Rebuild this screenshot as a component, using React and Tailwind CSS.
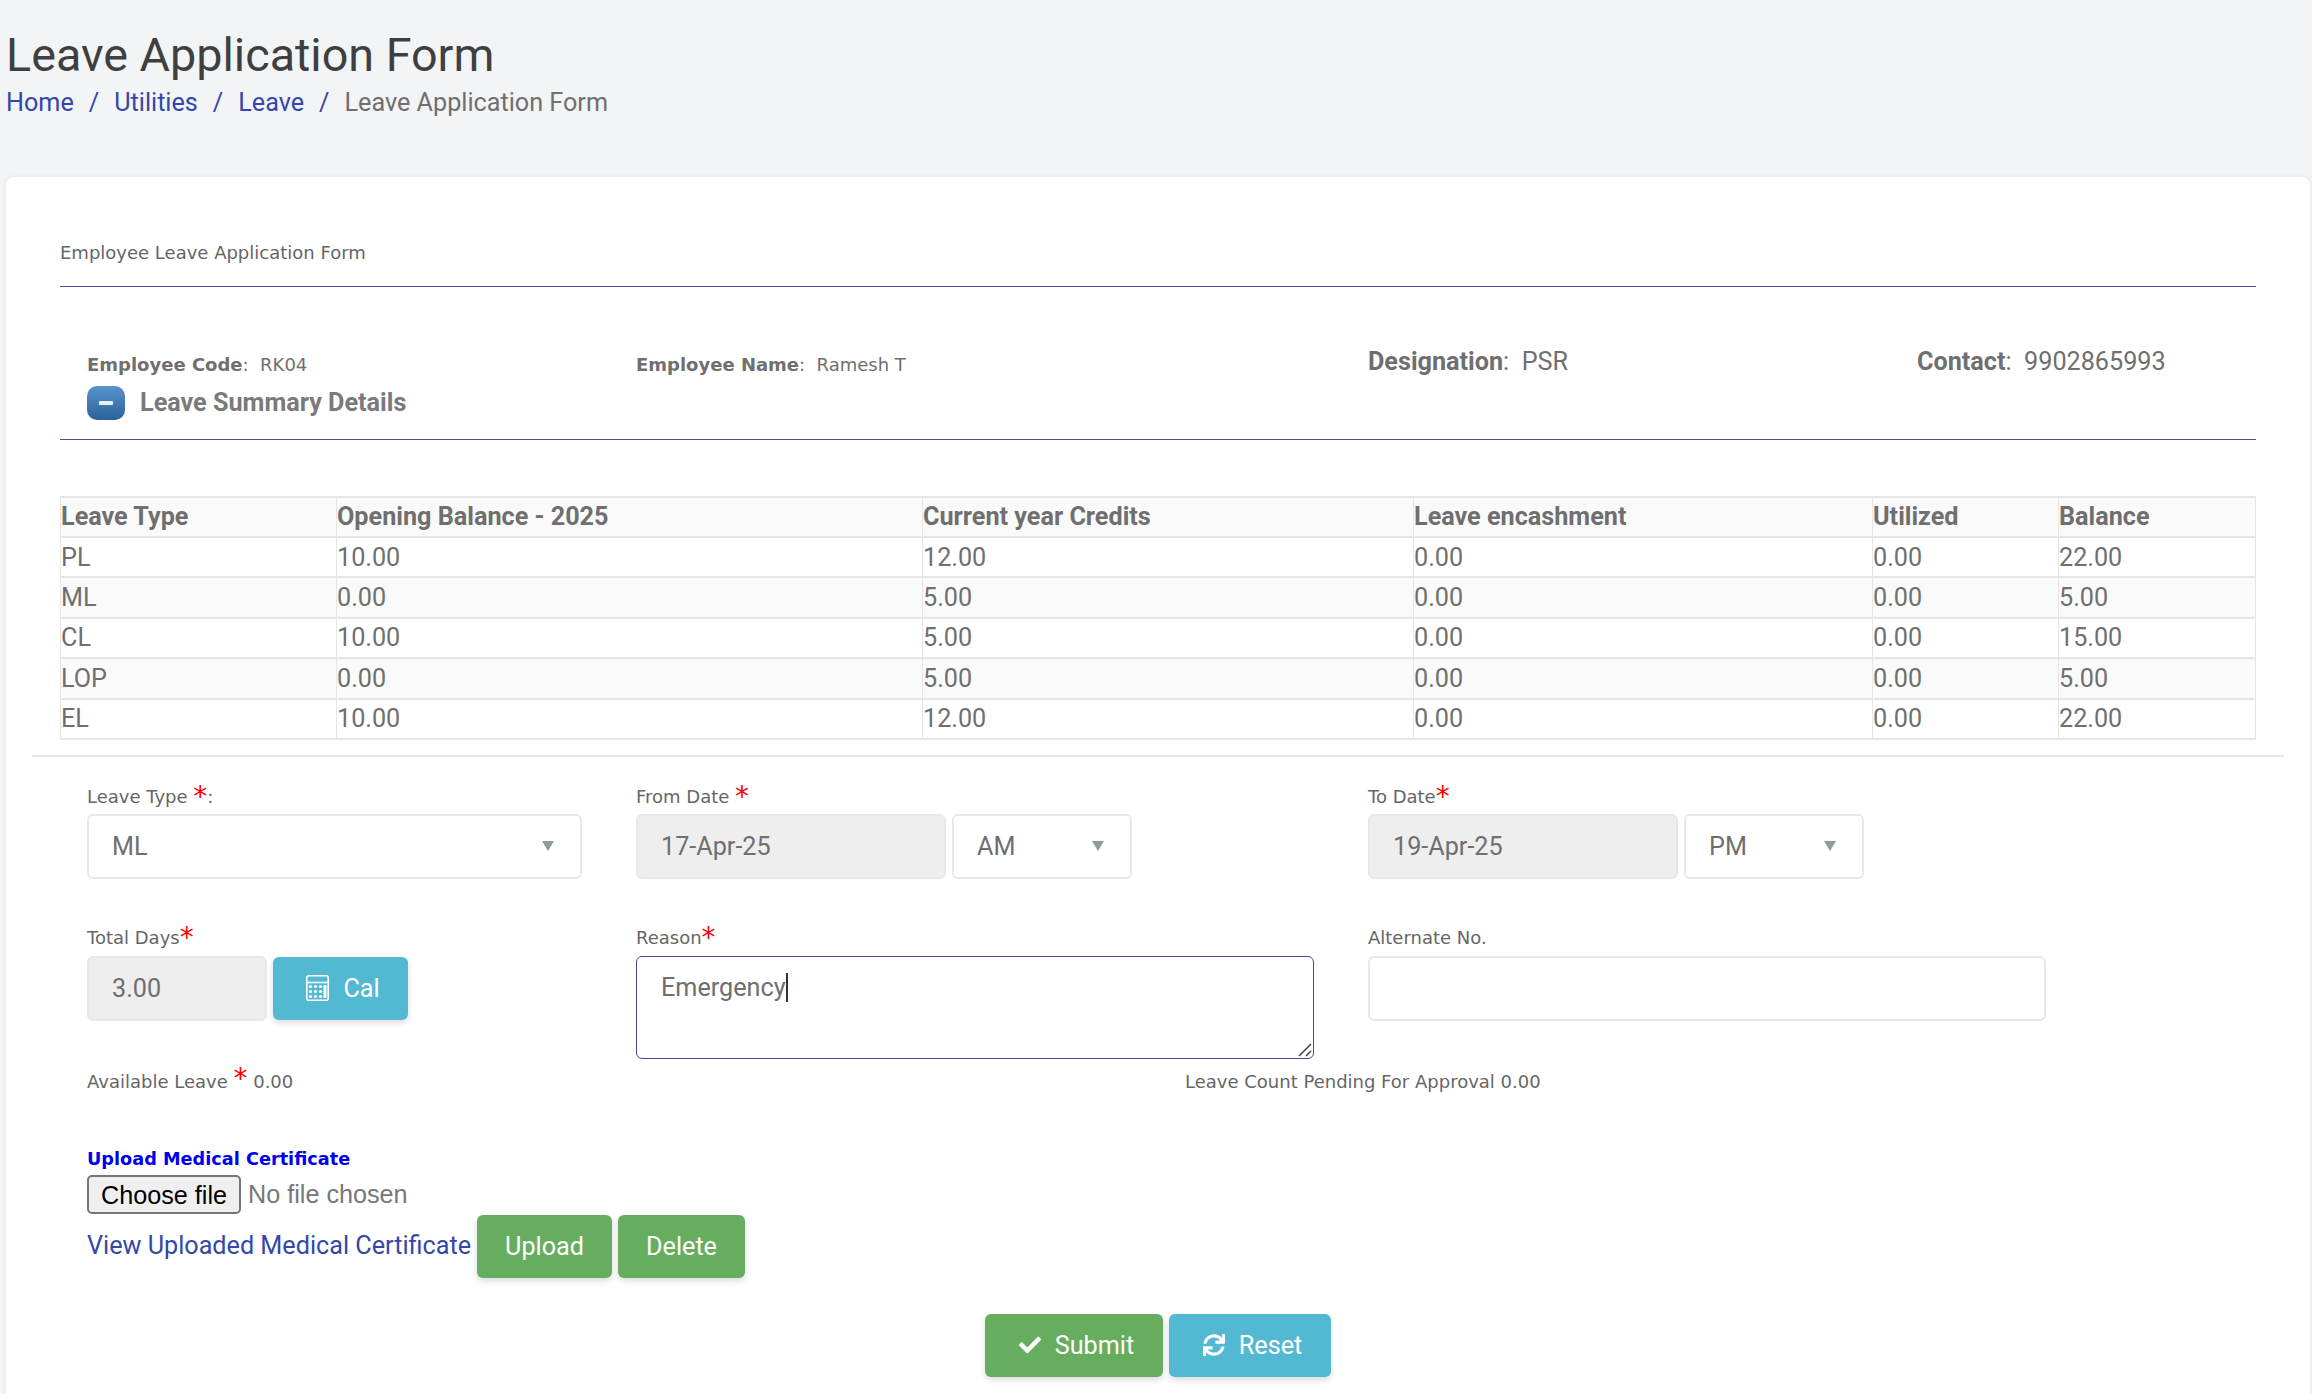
import React from "react";
import {FaCheck, FaSync} from "react-icons/fa";

const ROWS = [
    ["PL", "10.00", "12.00", "0.00", "0.00", "22.00"],
    ["ML", "0.00", "5.00", "0.00", "0.00", "5.00"],
    ["CL", "10.00", "5.00", "0.00", "0.00", "15.00"],
    ["LOP", "0.00", "5.00", "0.00", "0.00", "5.00"],
    ["EL", "10.00", "12.00", "0.00", "0.00", "22.00"],
];
const HEADERS = ["Leave Type", "Opening Balance - 2025", "Current year Credits", "Leave encashment", "Utilized", "Balance"];
const COLS = ["w-[276px]", "w-[586px]", "w-[491px]", "w-[459px]", "w-[186px]", "w-[197px]"];

const Star = () => <span className="text-[#ff0000] text-[28px] leading-[0]">*</span>;

const Label = ({children}) => (
    <div className="h-[28px] flex items-center text-[18px] text-[#666] font-['DejaVu_Sans',sans-serif] whitespace-nowrap">{children}</div>
);

const SelectBox = ({value, className}) => (
    <div className={`h-[65px] flex items-center justify-between bg-white border-2 border-[#e8e8e8] rounded-[6px] pl-[23px] pr-[26px] text-[25.2px] text-[#6f6f6f] ${className}`}>
        <span>{value}</span>
        <span className="w-0 h-0 border-x-[6px] border-x-transparent border-t-[10px] border-t-[#8f9a9f]"/>
    </div>
);

const ReadOnlyBox = ({value, className}) => (
    <div className={`h-[65px] flex items-center bg-[#eeeeee] border-2 border-[#e8e8e8] rounded-[6px] pl-[23px] text-[25.2px] text-[#6f6f6f] ${className}`}>
        {value}
    </div>
);

const CalcIcon = () => (
    <svg width="23" height="26" viewBox="0 0 23 26" fill="none" stroke="white" strokeWidth="1.6">
        <rect x="0.8" y="0.8" width="21.4" height="24.4" rx="2"/>
        <path d="M1 7.5h21"/>
        <g fill="white" stroke="none">
            <circle cx="4.5" cy="11.5" r="1.6"/>
            <circle cx="9.5" cy="11.5" r="1.6"/>
            <circle cx="14.5" cy="11.5" r="1.6"/>
            <circle cx="4.5" cy="16.5" r="1.6"/>
            <circle cx="9.5" cy="16.5" r="1.6"/>
            <circle cx="14.5" cy="16.5" r="1.6"/>
            <circle cx="4.5" cy="21.5" r="1.6"/>
            <circle cx="9.5" cy="21.5" r="1.6"/>
            <circle cx="14.5" cy="21.5" r="1.6"/>
            <rect x="17.5" y="10" width="3" height="13" rx="1.2"/>
        </g>
    </svg>
);

const ActionButton = ({children, className}) => (
    <button type="button" className={`flex items-center justify-center text-white text-[25.2px] font-normal rounded-[6px] shadow-[0_3px_6px_rgba(0,0,0,0.14)] ${className}`}>
        {children}
    </button>
);

const App = () => {
    return (
        <div className="w-[2312px] h-[1394px] overflow-hidden bg-[#f3f4f6] font-['Roboto',sans-serif]">
            <div className="pl-[6px] h-[177px] pt-[25px]">
                <h1 className="text-[46.7px] leading-[60px] text-[#3f3f3f]">Leave Application Form</h1>
                <div className="flex items-center h-[36px] text-[25.2px] text-[#3347a8]">
                    <span>Home</span>
                    <span className="mx-[15px]">/</span>
                    <span>Utilities</span>
                    <span className="mx-[15px]">/</span>
                    <span>Leave</span>
                    <span className="mx-[15px]">/</span>
                    <span className="text-[#6f6f6f]">Leave Application Form</span>
                </div>
            </div>

            <div className="ml-[6px] w-[2304px] h-[1300px] bg-white rounded-[8px] shadow-[0_0_4px_rgba(0,0,0,0.08)] px-[26px]">
                <div className="px-[28px]">
                    <div className="h-[110px] pt-[60px] border-b border-[#5148a0] text-[18px] text-[#666] font-['DejaVu_Sans',sans-serif] leading-[32px]">
                        Employee Leave Application Form
                    </div>

                    <div className="h-[153px] pl-[27px] border-b border-[#5148a0] pt-[59px]">
                        <div className="flex items-center h-[36px]">
                            <div className="w-[549px] text-[18px] text-[#6f6f6f] font-['DejaVu_Sans',sans-serif]">
                                <b>Employee Code</b>:&nbsp; RK04
                            </div>
                            <div className="w-[732px] text-[18px] text-[#6f6f6f] font-['DejaVu_Sans',sans-serif]">
                                <b>Employee Name</b>:&nbsp; Ramesh T
                            </div>
                            <div className="w-[549px] pb-[4px] text-[25.2px] text-[#6f6f6f]">
                                <b>Designation</b>:&nbsp; PSR
                            </div>
                            <div className="pb-[4px] text-[25.2px] text-[#6f6f6f]">
                                <b>Contact</b>:&nbsp; 9902865993
                            </div>
                        </div>
                        <div className="flex items-center gap-[15px] mt-[2px]">
                            <span className="w-[38px] h-[34px] flex items-center justify-center rounded-[10px] bg-gradient-to-b from-[#5a94d0] to-[#2a6198]">
                                <span className="w-[14px] h-[4px] bg-[#e6eef7] rounded-[1px]"/>
                            </span>
                            <span className="text-[25.2px] font-bold text-[#7a7a7a]">Leave Summary Details</span>
                        </div>
                    </div>

                    <table className="mt-[56px] table-fixed border-collapse text-[25.2px] text-[#6f6f6f]">
                        <thead>
                            <tr className="h-[40px] bg-[#fafafa]">
                                {HEADERS.map((h, i) => (
                                    <th key={h} className={`${COLS[i]} border-2 border-[#e6e6e6] border-l-1 border-r-1 text-left font-bold px-0 leading-none`}>{h}</th>
                                ))}
                            </tr>
                        </thead>
                        <tbody>
                            {ROWS.map((row, r) => (
                                <tr key={row[0]} className={`h-[40.4px] ${r % 2 === 1 ? "bg-[#fafafa]" : "bg-white"}`}>
                                    {row.map((c, i) => (
                                        <td key={i} className="border-2 border-[#e6e6e6] border-l-1 border-r-1 px-0 leading-none">{c}</td>
                                    ))}
                                </tr>
                            ))}
                        </tbody>
                    </table>
                </div>

                <div className="mt-[15px] border-t-2 border-[#e8e8e8] pt-[26px] pl-[55px]">
                    <div className="flex">
                        <div className="w-[549px]">
                            <Label>Leave Type&nbsp;<Star/>:</Label>
                            <SelectBox value="ML" className="w-[495px] mt-[3px]"/>
                        </div>
                        <div className="w-[732px]">
                            <Label>From Date&nbsp;<Star/></Label>
                            <div className="flex gap-[6px] mt-[3px]">
                                <ReadOnlyBox value="17-Apr-25" className="w-[310px]"/>
                                <SelectBox value="AM" className="w-[180px]"/>
                            </div>
                        </div>
                        <div>
                            <Label>To Date<Star/></Label>
                            <div className="flex gap-[6px] mt-[3px]">
                                <ReadOnlyBox value="19-Apr-25" className="w-[310px]"/>
                                <SelectBox value="PM" className="w-[180px]"/>
                            </div>
                        </div>
                    </div>

                    <div className="flex mt-[45px]">
                        <div className="w-[549px]">
                            <Label>Total Days<Star/></Label>
                            <div className="flex gap-[6px] mt-[4px]">
                                <ReadOnlyBox value="3.00" className="w-[180px]"/>
                                <ActionButton className="w-[135px] h-[63px] mt-[1px] pl-[5px] gap-[14px] bg-[#53b9d2]">
                                    <CalcIcon/>
                                    Cal
                                </ActionButton>
                            </div>
                        </div>
                        <div className="w-[732px]">
                            <Label>Reason<Star/></Label>
                            <div className="relative w-[678px] h-[103px] mt-[4px] border border-[#4e4596] rounded-[6px] pl-[24px] pt-[14px] text-[25.2px] text-[#6f6f6f] leading-[34px]">
                                <span className="border-r-2 border-[#333]">Emergency</span>
                                <svg className="absolute right-[1px] bottom-[1px]" width="14" height="14" viewBox="0 0 14 14" stroke="#444" strokeWidth="1.5">
                                    <path d="M1 13 13 1M8 13l5-5"/>
                                </svg>
                            </div>
                        </div>
                        <div>
                            <Label>Alternate No.</Label>
                            <div className="w-[678px] h-[65px] mt-[4px] border-2 border-[#e8e8e8] rounded-[6px]"/>
                        </div>
                    </div>

                    <div className="flex h-[40px] items-center mt-[3px] text-[18px] text-[#666] font-['DejaVu_Sans',sans-serif]">
                        <div className="w-[1098px]">Available Leave <Star/> 0.00</div>
                        <div>Leave Count Pending For Approval 0.00</div>
                    </div>

                    <div className="mt-[42px] text-[17.7px] font-bold text-[#0000ee] font-['DejaVu_Sans',sans-serif] leading-[30px]">
                        Upload Medical Certificate
                    </div>
                    <div className="flex items-center gap-[7px] mt-[1px] font-['Liberation_Sans',sans-serif] text-[25.2px] text-[#777]">
                        <button type="button" className="w-[154px] h-[39px] bg-[#efefef] border-2 border-[#767676] rounded-[5px] text-black">Choose file</button>
                        <span>No file chosen</span>
                    </div>
                    <div className="flex items-center mt-[1px]">
                        <span className="w-[390px] pb-[2px] whitespace-nowrap text-[25.2px] text-[#3347a8]">View Uploaded Medical Certificate</span>
                        <ActionButton className="w-[135px] h-[63px] bg-[#67ad5f]">Upload</ActionButton>
                        <ActionButton className="w-[127px] h-[63px] ml-[6px] bg-[#67ad5f]">Delete</ActionButton>
                    </div>

                    <div className="flex justify-center gap-[6px] mt-[36px] pr-[56px]">
                        <ActionButton className="w-[178px] h-[63px] pl-[6px] gap-[14px] bg-[#67ad5f]">
                            <FaCheck className="text-[22px]"/>
                            Submit
                        </ActionButton>
                        <ActionButton className="w-[162px] h-[63px] pl-[6px] gap-[14px] bg-[#53b9d2]">
                            <FaSync className="text-[22px]"/>
                            Reset
                        </ActionButton>
                    </div>
                </div>
            </div>
        </div>
    );
};

export default App;
